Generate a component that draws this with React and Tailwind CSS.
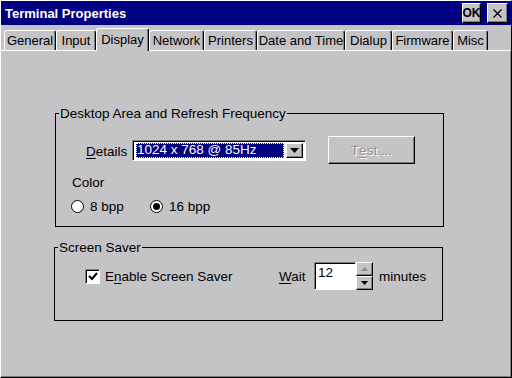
const raised =
  'border border-t-white border-l-white border-r-black border-b-black shadow-[inset_-1px_-1px_0_#808080]';
const sunken =
  'border border-t-[#808080] border-l-[#808080] border-r-white border-b-white shadow-[inset_1px_1px_0_#000]';

const tabs = [
  { label: 'General', w: 'w-[52px]' },
  { label: 'Input', w: 'w-[40px]' },
  { label: 'Display', w: 'w-[53px]', active: true },
  { label: 'Network', w: 'w-[55px]' },
  { label: 'Printers', w: 'w-[53px]' },
  { label: 'Date and Time', w: 'w-[88px]' },
  { label: 'Dialup', w: 'w-[47px]' },
  { label: 'Firmware', w: 'w-[61px]' },
  { label: 'Misc', w: 'w-[35px]' },
];

function Tab({ label, w, active }) {
  return (
    <div
      className={`${w} shrink-0 whitespace-nowrap text-[13px] flex items-center justify-center rounded-t-[3px] border-t border-l border-r border-t-white border-l-white border-r-black shadow-[inset_-1px_0_0_#808080] bg-[#c4c3c6] ${
        active ? 'h-[23px] -mb-px relative z-10 pb-[2px]' : 'h-[20px]'
      }`}
    >
      {label}
    </div>
  );
}

function Radio({ checked, label, className = '' }) {
  return (
    <div className={`flex items-center gap-[6px] ${className}`}>
      <div className="w-[13px] h-[13px] rounded-full bg-white border border-black flex items-center justify-center">
        {checked && <div className="w-[7px] h-[7px] rounded-full bg-black" />}
      </div>
      <span>{label}</span>
    </div>
  );
}

export default function App() {
  return (
    <div className="w-[512px] h-[378px] bg-[#c4c3c6] font-['Liberation_Sans',Arial,sans-serif] text-[13.5px] leading-[15px] text-black border border-t-white border-l-white border-r-black border-b-black flex flex-col overflow-hidden">
      {/* Title bar */}
      <div className="h-[24px] shrink-0 bg-[#000080] flex items-center pl-[4px] pr-[3px]">
        <span className="text-white font-bold text-[13px]">Terminal Properties</span>
        <div className="ml-auto flex gap-[6px]">
          <div className={`w-[19px] h-[20px] bg-[#c4c3c6] ${raised} flex items-center justify-center font-bold text-[12px]`}>
            OK
          </div>
          <div className={`w-[21px] h-[20px] bg-[#c4c3c6] ${raised} flex items-center justify-center`}>
            <svg width="9" height="9" viewBox="0 0 9 9" stroke="black" strokeWidth="1.2">
              <path d="M0.5 0.5 L8.5 8.5 M8.5 0.5 L0.5 8.5" />
            </svg>
          </div>
        </div>
      </div>

      {/* Tab strip */}
      <div className="h-[25px] shrink-0 flex items-end pl-[3px]">
        {tabs.map((t) => (
          <Tab key={t.label} {...t} />
        ))}
      </div>

      {/* Tab page */}
      <div className="flex-1 border-t border-white border-r border-r-[#808080] border-b border-b-[#808080] pl-[54px]">
        {/* Desktop Area group */}
        <fieldset className="mt-[55px] w-[389px] border border-black p-0 pb-[12px]">
          <legend className="ml-[3px] px-[1px]">Desktop Area and Refresh Frequency</legend>
          <div className="flex items-center mt-[15px] pl-[30px]">
            <span className="w-[46px] pt-[2px]">
              <u className="underline-offset-2">D</u>etails
            </span>
            <div className={`w-[174px] h-[21px] bg-white ${sunken} flex p-[2px] pl-[3px]`}>
              <div className="flex-1 bg-[#000080] text-white outline outline-1 outline-dotted outline-white -outline-offset-1 flex items-center pl-[1px] leading-none">
                1024 x 768 @ 85Hz
              </div>
              <div className={`w-[17px] ml-[2px] bg-[#c4c3c6] ${raised} flex items-center justify-center`}>
                <svg width="9" height="5" viewBox="0 0 9 5">
                  <path d="M0 0 H9 L4.5 5 Z" fill="black" />
                </svg>
              </div>
            </div>
            <div className={`ml-[22px] w-[87px] h-[28px] ${raised} flex items-center justify-center text-[#939295] [text-shadow:1px_1px_0_#fff]`}>
              T<u className="underline-offset-2">e</u>st ...
            </div>
          </div>
          <div className="mt-[11px] pl-[16px]">Color</div>
          <div className="flex mt-[9px] pl-[15px]">
            <Radio label="8 bpp" className="w-[79px]" />
            <Radio label="16 bpp" checked />
          </div>
        </fieldset>

        {/* Screen Saver group */}
        <fieldset className="mt-[13px] -ml-px w-[389px] border border-black p-0 pb-[30px]">
          <legend className="ml-[3px] px-[1px]">Screen Saver</legend>
          <div className="flex items-center mt-[7px] pl-[30px]">
            <div className="w-[194px] flex items-center gap-[5px]">
              <div className={`w-[15px] h-[15px] bg-white ${sunken} flex items-center justify-center`}>
                <svg width="10" height="9" viewBox="0 0 10 9" fill="none" stroke="black" strokeWidth="2">
                  <path d="M1 4 L4 7 L9 1" />
                </svg>
              </div>
              <span>
                E<u className="underline-offset-2">n</u>able Screen Saver
              </span>
            </div>
            <span className="w-[35px]">
              <u className="underline-offset-2">W</u>ait
            </span>
            <div className={`w-[42px] h-[28px] bg-white ${sunken} pl-[3px] pt-[2px]`}>12</div>
            <div className="w-[17px] h-[28px] flex flex-col">
              <div className={`flex-1 bg-[#c4c3c6] ${raised} flex items-center justify-center`}>
                <svg width="7" height="4" viewBox="0 0 7 4">
                  <path d="M0 4 H7 L3.5 0 Z" fill="#8a898c" />
                </svg>
              </div>
              <div className={`flex-1 bg-[#c4c3c6] ${raised} flex items-center justify-center`}>
                <svg width="7" height="4" viewBox="0 0 7 4">
                  <path d="M0 0 H7 L3.5 4 Z" fill="black" />
                </svg>
              </div>
            </div>
            <span className="ml-[6px]">minutes</span>
          </div>
        </fieldset>
      </div>
    </div>
  );
}
